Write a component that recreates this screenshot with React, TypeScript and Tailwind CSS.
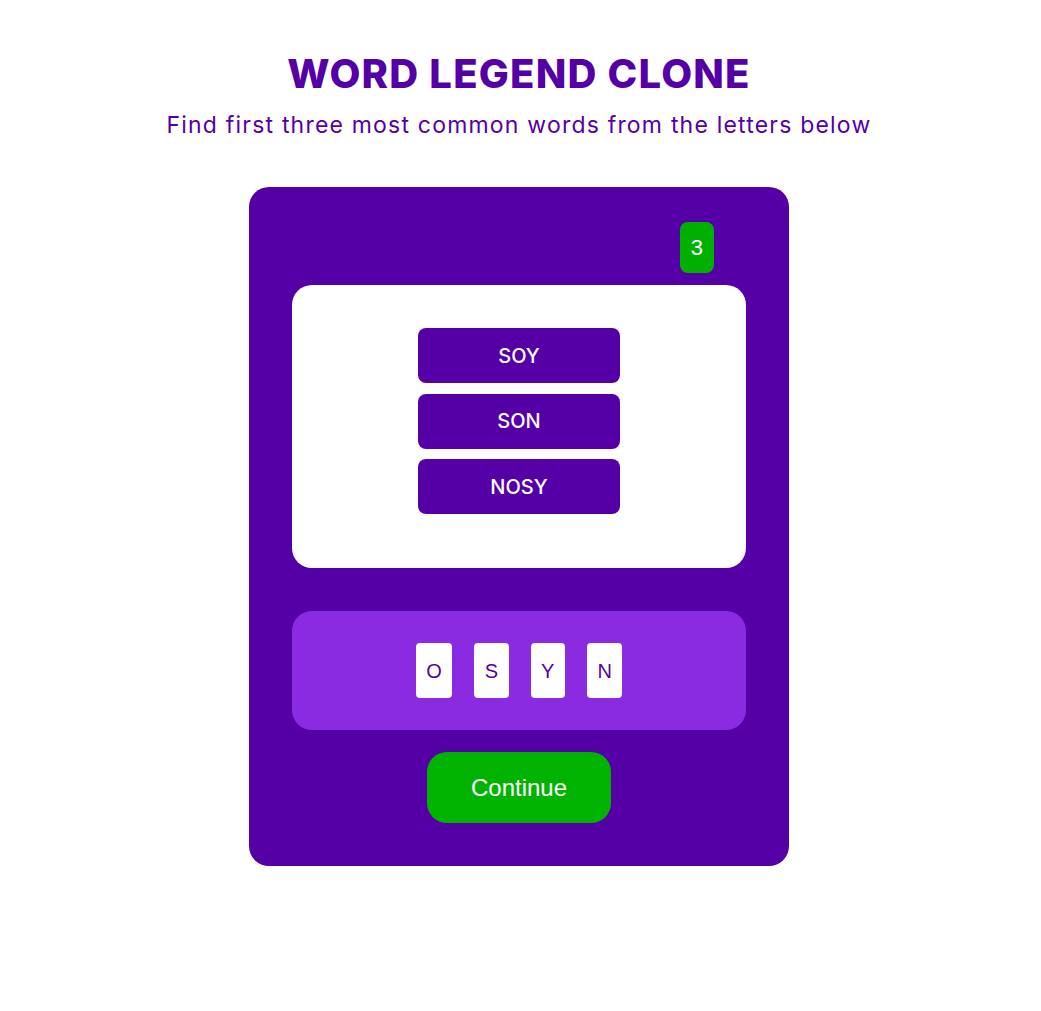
import React from 'react';

const words = ['SOY', 'SON', 'NOSY'];
const letters = ['O', 'S', 'Y', 'N'];

export default function App() {
  return (
    <div className="min-h-screen bg-white flex flex-col items-center pt-[54px] pr-[3px]" style={{ fontFamily: 'Inter, "Noto Sans", sans-serif' }}>
      <h1 className="text-[40px] leading-none font-extrabold text-[#5500a6] tracking-[1.2px]">WORD LEGEND CLONE</h1>
      <p className="mt-[20px] text-[23px] leading-none text-[#5500a6] tracking-[1.2px]">Find first three most common words from the letters below</p>

      {/* game card */}
      <div className="mt-[50px] w-[540px] rounded-[20px] bg-[#5500a6] px-[43px] pt-[35px] pb-[43px] flex flex-col">
        <div className="flex justify-end pr-[32px]">
          <span className="rounded-[8px] bg-[#00b000] px-[11px] py-[13px] text-[22px] leading-[25px] text-white" style={{ fontFamily: '"Liberation Sans", Arial, sans-serif' }}>
            3
          </span>
        </div>

        <div className="mt-[12px] h-[283px] rounded-[20px] bg-white flex flex-col items-center pt-[43px] gap-[10.5px]">
          {words.map((w) => (
            <div key={w} className="w-[202px] h-[55px] rounded-[8px] bg-[#5500a6] flex items-center justify-center text-[20px] font-medium text-white">
              {w}
            </div>
          ))}
        </div>

        <div className="mt-[43px] h-[119px] rounded-[20px] bg-[#8a2be2] flex items-center justify-center gap-[22px]">
          {letters.map((l) => (
            <div key={l} className="h-[55px] px-[10.5px] rounded-[4px] bg-white flex items-center justify-center text-[20px] text-[#5500a6]" style={{ fontFamily: '"Liberation Sans", Arial, sans-serif' }}>
              {l}
            </div>
          ))}
        </div>

        <div className="mt-[22px] flex justify-center">
          <button className="h-[71px] w-[184px] rounded-[20px] bg-[#00b300] text-[24px] text-white" style={{ fontFamily: '"Liberation Sans", Arial, sans-serif' }}>
            Continue
          </button>
        </div>
      </div>
    </div>
  );
}
